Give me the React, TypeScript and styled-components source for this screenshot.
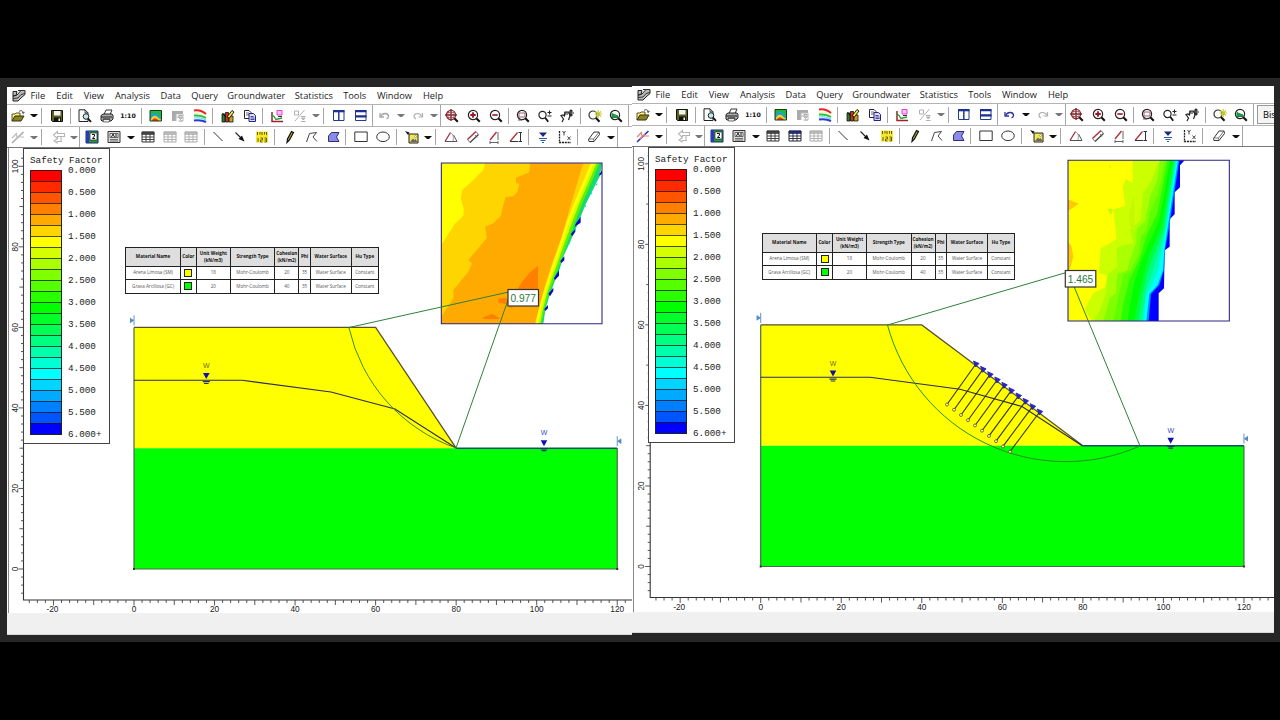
import React from "react";
import styled, { createGlobalStyle } from "styled-components";

const GlobalStyle = createGlobalStyle`
  body {
    margin: 0;
    background: #000;
    overflow: hidden;
  }
`;

const Page = styled.div`
  display: flex;
  flex-direction: column;
  justify-content: center;
  width: 1280px;
  height: 720px;
  background: #000;
`;

const Desktop = styled.div`
  display: flex;
  align-items: flex-start;
  box-sizing: border-box;
  height: 564px;
  padding-left: 7px;
  background: #262626;
`;

const Window = styled.div<{ $width: number; $top: number }>`
  display: flex;
  flex-direction: column;
  flex: none;
  width: ${(p) => p.$width}px;
  margin-top: ${(p) => p.$top}px;
  background: #fff;
  overflow: hidden;
`;

const MenuBar = styled.div`
  display: flex;
  align-items: center;
  height: 17px;
  padding-left: 5px;
  font: 9.3px "Open Sans", sans-serif;
  color: #222;
`;

const MenuItem = styled.span<{ $width: number }>`
  flex: none;
  width: ${(p) => p.$width}px;
  margin-left: 11.3px;
  display: flex;
  justify-content: center;
  white-space: nowrap;
`;

const AppIcon = styled.svg`
  flex: none;
  width: 14px;
  height: 13px;
  margin-right: -7px;
`;

const ToolBar = styled.div<{ $height: number }>`
  display: flex;
  align-items: center;
  box-sizing: border-box;
  height: ${(p) => p.$height}px;
  border-top: 1px solid #b4b4b4;
`;

const ToolButton = styled.div<{ $gap: number }>`
  display: flex;
  flex: none;
  align-items: center;
  justify-content: center;
  width: 18px;
  height: 18px;
  margin-left: ${(p) => p.$gap}px;
`;

const Caret = styled.div<{ $gap: number; $dim?: boolean }>`
  flex: none;
  box-sizing: border-box;
  width: 8px;
  height: 3px;
  margin-left: ${(p) => p.$gap}px;
  border: solid transparent;
  border-width: 3px 3px 0;
  border-top-color: ${(p) => (p.$dim ? "#777" : "#111")};
  background-clip: padding-box;
`;

const Separator = styled.div<{ $gap: number; $full?: boolean }>`
  flex: none;
  width: 1px;
  height: ${(p) => (p.$full ? 21 : 16)}px;
  margin-left: ${(p) => p.$gap}px;
  margin-right: 1px;
  background: #a6a6a6;
`;

const ScaleLabel = styled.span`
  font: bold 6.2px "DejaVu Sans", sans-serif;
  color: #111;
`;

const MethodBox = styled.div`
  flex: none;
  box-sizing: border-box;
  width: 60px;
  height: 19px;
  margin-left: 2px;
  padding-left: 5px;
  border: 1px solid #999;
  background: #f4f4f4;
  font: 9.3px/17px "Open Sans", sans-serif;
`;

const Canvas = styled.div`
  position: relative;
  box-sizing: border-box;
  height: 466px;
  border-top: 1px solid #777;
  background: #fff;
`;

const Drawing = styled.svg`
  display: block;
`;

const StatusBar = styled.div<{ $height: number }>`
  box-sizing: border-box;
  height: ${(p) => p.$height}px;
  border-bottom: 1px solid #d5d8d8;
  background: #f0f0f0;
`;

const Legend = styled.div`
  position: absolute;
  left: 16px;
  top: 0;
  box-sizing: border-box;
  width: 87px;
  height: 296px;
  padding: 5px 0 0 6px;
  border: 1px solid #444;
  background: #fff;
  font-family: "Liberation Mono", monospace;
  font-size: 9.3px;
  color: #222;
`;

const LegendTitle = styled.div`
  height: 16px;
  line-height: 13px;
  white-space: nowrap;
`;

const LegendBody = styled.div`
  display: flex;
`;

const Bands = styled.div`
  width: 32px;
  box-sizing: border-box;
  height: 265px;
  border: 1px solid #222;
  border-top: 0;
`;

const Band = styled.div<{ $color: string }>`
  box-sizing: border-box;
  height: 11px;
  border-top: 1px solid rgba(20, 20, 20, 0.75);
  background: ${(p) => p.$color};
`;

const BandLabels = styled.div`
  display: flex;
  flex-direction: column;
  margin: -10px 0 0 6px;
`;

const BandLabel = styled.span`
  height: 22px;
  line-height: 22px;
`;

const MaterialTable = styled.div<{ $left: number; $top: number }>`
  position: absolute;
  left: ${(p) => p.$left}px;
  top: ${(p) => p.$top}px;
  display: grid;
  grid-template-columns: 54.5px 16px 34px 44.5px 24px 11.5px 41px 27px;
  grid-template-rows: 19px 13.5px 13.5px;
  border: solid #222;
  border-width: 1px 0 0 1px;
  font-family: "Open Sans", sans-serif;
  font-size: 4.6px;
  line-height: 7px;
  color: #444;
`;

const Cell = styled.div<{ $head?: boolean }>`
  display: flex;
  align-items: center;
  justify-content: center;
  box-sizing: border-box;
  border: solid #222;
  border-width: 0 1px 1px 0;
  background: ${(p) => (p.$head ? "#dedede" : "#fff")};
  color: ${(p) => (p.$head ? "#111" : "#555")};
  font-weight: ${(p) => (p.$head ? 700 : 400)};
  text-align: center;
  white-space: pre;
  overflow: hidden;
`;

const Swatch = styled.div<{ $color: string }>`
  box-sizing: border-box;
  width: 8px;
  height: 8px;
  border: 1px solid #222;
  background: ${(p) => p.$color};
`;

const bandColors = [
  "#ff0000", "#ff2a00", "#ff5500", "#ff8000", "#ffaa00", "#ffd500",
  "#ffff00", "#d5ff00", "#aaff00", "#80ff00", "#55ff00", "#2aff00",
  "#00ff00", "#00ff2a", "#00ff55", "#00ff80", "#00ffaa", "#00ffd5",
  "#00ffff", "#00d5ff", "#00aaff", "#0080ff", "#0055ff", "#0000ff",
];

const bandLabels = [
  "0.000", "0.500", "1.000", "1.500", "2.000", "2.500", "3.000",
  "3.500", "4.000", "4.500", "5.000", "5.500", "6.000+",
];

const menus: [string, number][] = [
  ["File", 15], ["Edit", 16], ["View", 20], ["Analysis", 34.5],
  ["Data", 19.5], ["Query", 25.5], ["Groundwater", 55.5], ["Statistics", 37],
  ["Tools", 22], ["Window", 35], ["Help", 19.5],
];

const Lens = ({ color = "#222", children }: any) => (
  <>
    <circle cx="6" cy="6" r="4.6" fill="#fff" stroke={color} strokeWidth="1.2" />
    <path d="M9.3 9.3 L12.8 12.8" stroke="#111" strokeWidth="2" />
    {children}
  </>
);

const TableGlyph = ({ head, line }: any) => (
  <>
    <path d="M1 2h12v10H1z" fill="#fff" stroke={line} />
    <path d="M1 2h12v2.5H1z" fill={head} stroke={line} strokeWidth=".6" />
    <path d="M5 4v8M9 4v8M1 7h12M1 9.5h12" stroke={line} strokeWidth=".9" />
  </>
);

const icons: Record<string, (on: boolean) => React.ReactNode> = {
  open: () => (
    <>
      <path d="M1 12V5h3l1-1h4v3" fill="#ffee70" stroke="#554" />
      <path d="M1 12l3-5h9l-3 5z" fill="#8a8420" stroke="#333010" />
      <path d="M8 2.5c2-1.6 4-.8 4.300 1.500M11 3.500l1.400 1 1-1.600" fill="none" stroke="#333" strokeWidth=".9" />
    </>
  ),
  save: () => (
    <>
      <path d="M1.500 1.500h11v11h-10l-1-1z" fill="#5d611c" stroke="#111" />
      <path d="M4 2h6.500v4.500H4z" fill="#f2f2f2" />
      <path d="M4 8.500h7v4H4z" fill="#111" />
      <path d="M8.500 9.500h1.500v2.500H8.500z" fill="#fff" />
    </>
  ),
  preview: () => (
    <>
      <path d="M1 .8h6l3 3V12.500H1z" fill="#fff" stroke="#222" />
      <path d="M7 .8v3h3" fill="none" stroke="#222" strokeWidth=".8" />
      <circle cx="8" cy="7.500" r="2.800" fill="#bfe8ee" stroke="#222" />
      <path d="M10 9.600l3 3.200" stroke="#111" strokeWidth="1.800" />
    </>
  ),
  print: () => (
    <>
      <path d="M4 5.500L6 1h6l-2 4.500" fill="#fff" stroke="#333" />
      <path d="M1 6.500l2-1.500h9l1 1.500v3.500l-2 2H2l-1-1z" fill="#aaa" stroke="#222" />
      <path d="M1 8h11M3 10h7" stroke="#222" />
      <path d="M3 10.500h7l-1 2.500H3.500z" fill="#eee" stroke="#333" strokeWidth=".7" />
    </>
  ),
  contour: () => (
    <>
      <path d="M1 1.500h11.500v10.500H1z" fill="#22b83c" />
      <path d="M1 12V7c3-6 8-3 11.500 2v3z" fill="#1aa5c8" />
      <path d="M1.500 12c.5-5 5-7 8-3l3 2v1z" fill="#f4d224" />
      <path d="M3 12c1-3.500 4-4 7 0z" fill="#e63b1c" />
      <path d="M1 1.500h11.500v10.500H1z" fill="none" stroke="#1a3a1a" />
    </>
  ),
  grayGrid: () => (
    <>
      <path d="M1 2h11v3H5v7H1z" fill="#aaa" />
      <path d="M5 5h7v7H9M5 5v7M5 8h4" stroke="#bbb" fill="none" />
      <path d="M7.500 6.500h4M7.500 8l2 2.500L11.500 8zM7.500 12h4" fill="#ccc" stroke="#aaa" />
    </>
  ),
  rainbow: () => (
    <g fill="none" strokeWidth="2">
      <path d="M1 1.500c5-1 8 0 12 3.500" stroke="#ee2020" />
      <path d="M1 4.500c5-.5 8 0 12 3.500" stroke="#f4f4c0" />
      <path d="M1 6.500c5-.5 8 0 12 2.500" stroke="#25c040" />
      <path d="M1 9c5-.8 8 0 12 2" stroke="#50d8e8" strokeWidth="1.200" />
      <path d="M1 11.500c5-.8 8-.5 12 1.500" stroke="#2a38d8" />
    </g>
  ),
  palette: () => (
    <>
      <path d="M1 5h3v8H1z" fill="#228030" stroke="#111" strokeWidth=".8" />
      <path d="M4.500 3.500h3V13h-3z" fill="#d22c20" stroke="#111" strokeWidth=".8" />
      <path d="M8 7h4v6H8z" fill="#c8a020" stroke="#111" strokeWidth=".8" />
      <path d="M6 8l5-6.500L13 3 8.500 9z" fill="#f4e040" stroke="#111" strokeWidth=".9" />
      <path d="M1.500 4l3 4" stroke="#111" />
    </>
  ),
  copy: () => (
    <>
      <path d="M1.500 1.500h4.500l2 2v6H1.500z" fill="#fff" stroke="#223" />
      <path d="M3 4h3M3 6h3" stroke="#446" strokeWidth=".8" />
      <path d="M6 4.500h4.500l2 2V12.500H6z" fill="#dde" stroke="#228" />
      <path d="M7.500 7.500h3M7.500 9h4M7.500 10.500h4" stroke="#228" strokeWidth=".8" />
    </>
  ),
  redAxes: () => (
    <>
      <path d="M2 3v9.500h11" fill="none" stroke="#a02030" strokeWidth="1.500" />
      <path d="M1 5.500l3 2 2 3 6-1.500" fill="none" stroke="#20a030" strokeWidth="1.300" />
      <path d="M7 1.500h5v4.500H7z" fill="#ffc0ff" stroke="#e040d0" />
      <path d="M8 7.500h4" stroke="#333" />
    </>
  ),
  percent: () => (
    <g fill="none" stroke="#b0b0b0">
      <path d="M1.500 2h4v4h-4zM2 12L11.500 1" />
      <path d="M8 7.500h4.500M8 12.500h4.500M8.500 9h3.500l-1.700 2z" fill="#bbb" />
    </g>
  ),
  tileV: () => (
    <>
      <path d="M1.500 1.500h10.500v10H1.500z" fill="#fff" stroke="#223a90" />
      <path d="M1 2.200h11.500" stroke="#1c2f92" strokeWidth="2.200" />
      <path d="M6.800 2v10" stroke="#223a90" strokeWidth="1.500" />
    </>
  ),
  tileH: () => (
    <>
      <path d="M1.500 1.500h10.500v10H1.500z" fill="#fff" stroke="#223a90" />
      <path d="M1 2.200h11.500M1 7.300h11.500" stroke="#1c2f92" strokeWidth="2.200" />
    </>
  ),
  undo: (on) => (
    <g fill="none" stroke={on ? "#2a35a0" : "#a5a5a5"} strokeWidth="1.300">
      <path d="M2.500 7.500C5 3 10.500 4 10.500 7.500c0 1.500-1 2-2 2.500" />
      <path d="M2 4v4h4" />
    </g>
  ),
  redo: () => (
    <g fill="none" stroke="#b0b0b0" strokeWidth="1.200">
      <path d="M11 7.500C8.500 3 3 4 3 7.500c0 1.500 1 2 2 2.500" />
      <path d="M11.500 4v4h-4" />
    </g>
  ),
  zoomAll: () => (
    <Lens color="#802830">
      <path d="M6 0v12M0 6h12" stroke="#802830" strokeWidth="1.400" />
      <path d="M3 3.500h6v5H3z" fill="none" stroke="#a04040" strokeWidth=".8" />
    </Lens>
  ),
  zoomIn: () => <Lens><path d="M6 3.300v5.400M3.300 6h5.400" stroke="#a01028" strokeWidth="1.800" /></Lens>,
  zoomOut: () => <Lens><path d="M3.300 6h5.400" stroke="#a01028" strokeWidth="1.600" /></Lens>,
  zoomWin: () => (
    <Lens>
      <path d="M3 4h6v4H3z" fill="none" stroke="#a06070" />
      <path d="M2 11h4" stroke="#555" />
    </Lens>
  ),
  zoomPm: () => (
    <>
      <circle cx="4.500" cy="6" r="3.600" fill="#fff" stroke="#222" strokeWidth="1.200" />
      <path d="M7.200 8.800l3 4" stroke="#111" strokeWidth="1.800" />
      <path d="M9.500 3.500h4M11.500 1.500v4M9.500 7h4" stroke="#222" strokeWidth="1.100" />
    </>
  ),
  pan: () => (
    <>
      <path d="M2 13l1.500-3L1 6.500 3 6l1.500 1L5 3l4 0 1 4-1.500 4" fill="#fff" stroke="#222" strokeWidth="1.200" />
      <path d="M5 3v3M7 3v3" stroke="#222" />
      <path d="M8 4h6M11 1v6M9.500 2.500L11 1l1.500 1.500M9.500 5.500L11 7l1.500-1.500" fill="none" stroke="#222" strokeWidth="1.100" />
    </>
  ),
  zoomStar: () => (
    <>
      <circle cx="5" cy="6" r="4" fill="#fff" stroke="#333" strokeWidth="1.200" />
      <path d="M8 9l3.500 3.800" stroke="#111" strokeWidth="2" />
      <path d="M6.500 5h7.500M10.200 1v8M7.500 2.300l5.500 5.400M13 2.300L7.500 7.700" stroke="#c0c830" strokeWidth="1.100" />
    </>
  ),
  zoomExt: () => <Lens><path d="M3 8.500V4.500l2 1 4 1.500v1.500z" fill="#20a040" stroke="#184" /></Lens>,
  bolt: (on) => (
    <>
      <path d="M1 13L12.500 2" stroke={on ? "#2630c0" : "#aaa"} strokeWidth="1.600" />
      <path d="M1 8l5-5M4 10l5-5M5 3l1 4M8 7h5" stroke={on ? "#e08070" : "#bbb"} strokeWidth="1.100" />
    </>
  ),
  arrows: () => (
    <g fill="none" stroke="#b4b4b4" strokeWidth="1.100">
      <path d="M1.500 5l4-3.500v2h7v3h-7v2z" />
      <path d="M5 9l-3 2 3 2v-1.500h5M9 7v5" />
    </g>
  ),
  infoGreen: () => (
    <>
      <path d="M1 1h12v12H1z" fill="#2a9a38" stroke="#1a2a6a" />
      <path d="M1 1h3v12H1z" fill="#2838c0" />
      <path d="M5 3h7v7H5z" fill="#fff" stroke="#222" strokeWidth=".7" />
      <path d="M7 4.500h2.500v1.500L7.500 8.500H10" fill="none" stroke="#111" />
    </>
  ),
  infoView: () => (
    <>
      <path d="M1 1.500h12v11H1z" fill="#ddd" stroke="#333" />
      <path d="M3 3.500h8v4H3z" fill="#fff" stroke="#444" strokeWidth=".8" />
      <path d="M4.500 7L6 4l1.500 3M9 4v3" fill="none" stroke="#111" />
      <path d="M3 9.500h8M3 11h8" stroke="#555" strokeWidth=".8" />
    </>
  ),
  table: () => <TableGlyph head="#444" line="#333" />,
  tableBlue: (on) => <TableGlyph head={on ? "#1c28a0" : "#bbb"} line={on ? "#223" : "#aaa"} />,
  tableGray: () => <TableGlyph head="#bbb" line="#aaa" />,
  line: () => <path d="M2.500 2L11.500 11" stroke="#333" strokeWidth="1" />,
  arrow: () => (
    <>
      <path d="M2.500 2.500L9 9" stroke="#222" strokeWidth="1.100" />
      <path d="M11.500 11.500L5.500 9 9 5.500z" fill="#111" />
    </>
  ),
  ruler: () => (
    <>
      <path d="M1 1.500h12v11H1z" fill="#f6e82c" />
      <path d="M2.500 2v3M5 2v2.500M7 2v3M9.500 2v2.500M11.500 2v3" stroke="#554c00" strokeWidth=".9" />
      <path d="M3 8v4M5.500 8h2v2h-2v2h2M9.500 8h2v4h-2M9.500 10h2" stroke="#5c5400" strokeWidth=".9" fill="none" />
    </>
  ),
  pencil: () => <path d="M4 12.500L4.500 9 8.500 1.500l2 1L6.500 10z" fill="#a8a030" stroke="#111" strokeWidth="1.200" />,
  polyline: () => <path d="M1.500 12L4.500 3.500 11.500 2.500 8 7 12 11.500" fill="none" stroke="#444" />,
  polygon: () => <path d="M1.500 11.500V6l3-3.500h7.500L9.500 7l2.500 4.500z" fill="#8a8ae8" stroke="#303078" />,
  rect: () => <path d="M.8 2h12.400v9.500H.8z" fill="#fff" stroke="#333" />,
  ellipse: () => <ellipse cx="7" cy="6.800" rx="6.300" ry="4.800" fill="#fff" stroke="#333" />,
  image: () => (
    <>
      <path d="M4 4h9v9H4z" fill="#f4e850" stroke="#222" />
      <path d="M5 12l3-3.500 1.500 1.500 1-1 2 3z" fill="#667" />
      <circle cx="10.500" cy="6.500" r="1" fill="#fff" stroke="#666" strokeWidth=".5" />
      <path d="M0 1l4.500 1.500L3 5z" fill="#111" />
    </>
  ),
  triangle: () => (
    <>
      <path d="M1 11.500L6.500 2.500" stroke="#a03040" strokeWidth="1.300" />
      <path d="M1 11.500h12L9.500 5" fill="none" stroke="#555" />
      <path d="M7 3c2 1 3 4 2 8" fill="none" stroke="#888" strokeWidth=".8" />
    </>
  ),
  parallel: () => (
    <>
      <path d="M1.500 9.500L10 1.500" stroke="#b03040" strokeWidth="1.400" />
      <path d="M4 12.500L12.500 4.500" stroke="#444" strokeWidth="1.200" />
      <path d="M1.500 9.500l2.500 3M10 1.500l2.500 3M9 5l2 2.500" stroke="#555" strokeWidth=".8" />
    </>
  ),
  rise: () => (
    <>
      <path d="M3 10L9.500 2" stroke="#b03040" strokeWidth="1.300" />
      <path d="M11 2v8M3 12.500h8M3 11v3M11 11v3" stroke="#555" strokeWidth=".9" />
    </>
  ),
  height: () => (
    <>
      <path d="M1 11.500L8.500 2.500" stroke="#b03040" strokeWidth="1.300" />
      <path d="M1 11.500h8M9.500 2.500h3.500M9.500 11.500h3.500M11.500 3v8" stroke="#333" strokeWidth="1" />
    </>
  ),
  water: () => (
    <>
      <path d="M3 2.500h8L7 7z" fill="#20287c" />
      <path d="M3 8.500h8M4.500 10.500h5M6 12.500h2" stroke="#2a5aa8" />
    </>
  ),
  axes: () => (
    <>
      <path d="M1.500 1v11.500H13" fill="none" stroke="#222" strokeDasharray="2 .8" strokeWidth="1.300" />
      <path d="M4.500 1l1.500 2 1.500-2M6 3v2.500M9.500 6.500l3 3.500M12.500 6.500l-3 3.500" fill="none" stroke="#333" strokeWidth=".9" />
    </>
  ),
  eraser: () => (
    <>
      <path d="M1.500 9.500L7 2h5l.5 2.500L7 11.500H2z" fill="#fff" stroke="#333" />
      <path d="M7 11.500L6.500 9h-5M6.500 9L12 2" fill="none" stroke="#555" strokeWidth=".8" />
    </>
  ),
};

// "v" is a drop-down caret, "V" a dimmed one, "|" a separator, "||" a full-height one
type Tool = [string, number];

const fileTools: Tool[] = [
  ["open", 2], ["v", 3], ["|", 3], ["save", 5], ["|", 4], ["preview", 4],
  ["print", 4], ["1:10", 3], ["|", 4], ["contour", 4], ["grayGrid", 4],
  ["rainbow", 4], ["|", 3], ["palette", 5], ["copy", 4], ["|", 3],
  ["redAxes", 4], ["percent", 5], ["V", 3], ["|", 3], ["tileV", 5],
  ["tileH", 4], ["||", 2], ["undo", 2], ["u", 3], ["redo", 4], ["V", 3],
  ["||", 2], ["zoomAll", 1], ["zoomIn", 4], ["zoomOut", 4], ["|", 3],
  ["zoomWin", 4], ["zoomPm", 4], ["pan", 4], ["|", 4], ["zoomStar", 4],
  ["zoomExt", 3], ["||", 3],
];

const drawTools: Tool[] = [
  ["bolt", 2], ["u", 3], ["|", 3], ["arrows", 7], ["V", 2], ["||", 1],
  ["infoGreen", 2], ["infoView", 4], ["v", 4], ["table", 4],
  ["tableBlue", 4], ["tableGray", 3], ["|", 4], ["line", 3], ["arrow", 4],
  ["ruler", 4], ["|", 3], ["pencil", 5], ["polyline", 4], ["polygon", 4],
  ["|", 2], ["rect", 5], ["ellipse", 4], ["|", 4], ["image", 5], ["v", 3],
  ["|", 3], ["triangle", 5], ["parallel", 4], ["rise", 3], ["height", 4],
  ["|", 3], ["water", 4], ["axes", 4], ["|", 3], ["eraser", 6], ["v", 4],
  ["||", 2],
];

const Tools = ({ items, active }: { items: Tool[]; active: boolean }) => (
  <>
    {items.map(([name, gap], i) => {
      if (name === "|" || name === "||") return <Separator key={i} $gap={gap} $full={name === "||"} />;
      if (name === "v") return <Caret key={i} $gap={gap} />;
      if (name === "V") return <Caret key={i} $gap={gap} $dim />;
      if (name === "u") return <Caret key={i} $gap={gap} $dim={!active} />;
      return (
        <ToolButton key={i} $gap={gap}>
          {name === "1:10" ? (
            <ScaleLabel>1:10</ScaleLabel>
          ) : (
            <svg width="14" height="14" viewBox="0 0 14 14" fill="none">{icons[name](active)}</svg>
          )}
        </ToolButton>
      );
    })}
  </>
);

const materials = [
  ["Arena Limosa (SM)", "#ffff00", "18", "Mohr-Coulomb", "20", "35", "Water Surface", "Constant"],
  ["Grava Arcillosa (GC)", "#00ff00", "20", "Mohr-Coulomb", "40", "35", "Water Surface", "Constant"],
];

const Materials = ({ left, top }: { left: number; top: number }) => (
  <MaterialTable $left={left} $top={top}>
    {["Material Name", "Color", "Unit Weight\n(kN/m3)", "Strength Type", "Cohesion\n(kN/m2)", "Phi", "Water Surface", "Hu Type"].map((h) => (
      <Cell key={h} $head>{h}</Cell>
    ))}
    {materials.map((row) =>
      row.map((value, i) => (
        <Cell key={row[0] + i}>{i === 1 ? <Swatch $color={value} /> : value}</Cell>
      ))
    )}
  </MaterialTable>
);

const SafetyLegend = () => (
  <Legend>
    <LegendTitle>Safety Factor</LegendTitle>
    <LegendBody>
      <Bands>
        {bandColors.map((c) => <Band key={c} $color={c} />)}
      </Bands>
      <BandLabels>
        {bandLabels.map((l) => <BandLabel key={l}>{l}</BandLabel>)}
      </BandLabels>
    </LegendBody>
  </Legend>
);

const SCALE = 4.027;

const range = (from: number, to: number, step: number) => {
  const out: number[] = [];
  for (let v = from; v <= to; v += step) out.push(v);
  return out;
};

// ox, oy: pixel position of the model origin (0, 0)
const Rulers = ({ ox, oy }: { ox: number; oy: number }) => {
  const x0 = ox - 110.5;
  const y0 = oy + 31;
  return (
    <g fontFamily="Liberation Sans, sans-serif" fontSize="8.3" fill="#222" textAnchor="middle">
      <path d={`M${x0} ${y0 - 460}V${y0}H${x0 + 640}`} fill="none" stroke="#333" strokeWidth="1.1" />
      {range(-26, 126, 2).map((v) => (
        <path key={v} d={`M${ox + v * SCALE} ${y0}v${v % 20 === 0 ? 5.5 : v % 10 === 0 ? 5 : 3}`} stroke="#444" strokeWidth=".9" />
      ))}
      {range(-6, 102, 2).map((v) => (
        <path key={v} d={`M${x0} ${oy - v * SCALE}h${v % 20 === 0 ? -5 : v % 10 === 0 ? -4 : -2.5}`} stroke="#444" strokeWidth=".9" />
      ))}
      {range(-20, 120, 20).map((v) => (
        <text key={v} x={ox + v * SCALE - (v < 0 ? 1 : 0)} y={y0 + 12}>{v}</text>
      ))}
      {range(0, 100, 20).map((v) => (
        <text key={v} transform={`translate(${x0 - 6} ${oy - v * SCALE}) rotate(-90)`}>{v}</text>
      ))}
    </g>
  );
};

const WaterMark = ({ x, y, onLand }: { x: number; y: number; onLand?: boolean }) => (
  <g>
    <text x={x} y={y - 12.5} fontFamily="Liberation Sans, sans-serif" fontSize="7" fill={onLand ? "#6d6a20" : "#3a48c8"} textAnchor="middle">W</text>
    <path d={`M${x - 3.3} ${y - 7.5}h6.600l-3.300 6z`} fill="#1010b0" />
    <path d={`M${x - 3.5} ${y + 1.200}h7M${x - 2.300} ${y + 3}h4.600`} stroke="#223070" strokeWidth="1.200" />
  </g>
);

const EdgeMark = ({ x, y, flip }: { x: number; y: number; flip?: boolean }) => (
  <g transform={`translate(${x} ${y}) scale(${flip ? -1 : 1} 1)`} stroke="#5088c0" fill="#5088c0">
    <path d="M0-5V5" strokeWidth=".9" />
    <path d="M-3.500-2.500v5M-3.500-2l3 2-3 2z" strokeWidth=".8" />
  </g>
);

const Soil = ({ ox, oy, crest }: { ox: number; oy: number; crest: number }) => {
  const top = oy - 60 * SCALE;
  const mid = oy - 30 * SCALE;
  const right = ox + 120 * SCALE;
  const toe = ox + 80 * SCALE;
  const edge = ox + crest * SCALE;
  return (
    <g>
      <path d={`M${ox} ${top}H${edge}L${toe} ${mid}H${ox}z`} fill="#ffff00" />
      <path d={`M${ox} ${mid}H${right}V${oy}H${ox}z`} fill="#00ff00" />
      <path d={`M${ox} ${top}H${edge}L${toe} ${mid}`} fill="none" stroke="#5a5030" strokeWidth="1.300" />
      <path d={`M${ox} ${top}V${oy}H${right}V${mid}`} fill="none" stroke="#4c6a4c" strokeWidth="1.200" />
      <path d={`M${toe} ${mid}H${right}`} stroke="#14506e" strokeWidth="1.600" />
      <path d={`M${ox - 1} ${oy - 1}h2v2h-2zM${right - 1} ${oy - 1}h2v2h-2z`} fill="#333" />
      <WaterMark x={ox + 72.3} y={oy - 188.5} onLand />
      <WaterMark x={ox + 410} y={mid - 0.5} />
      <EdgeMark x={ox} y={top - 7} />
      <EdgeMark x={right} y={mid - 7} flip />
    </g>
  );
};

const FactorBox = ({ x, y, value }: { x: number; y: number; value: string }) => (
  <g>
    <rect x={x} y={y} width="30.500" height="16.500" fill="#fff" stroke="#333" strokeWidth="1.200" />
    <text x={x + 15.2} y={y + 12} fontFamily="Liberation Sans, sans-serif" fontSize="10.2" fill="#2a7a3a" textAnchor="middle">{value}</text>
  </g>
);

const SteepContours = () => (
  <g transform="translate(430 155) scale(.33333)">
    <path d="M34 24H516V506H34z" fill="#fff" />
    <path d="M34 24H516L510 62 496 90 480 122 466 150 452 185 438 220 420 262 402 300 388 345 372 385 356 430 346 465 340 506H34z" fill="#18d870" />
    <path d="M34 24H508L490 70 460 138 434 205 404 285 380 350 358 410 342 465 335 506H34z" fill="#60f000" />
    <path d="M34 24H500L480 72 450 140 425 205 397 282 373 350 351 415 338 465 330 506H34z" fill="#d5ff00" />
    <path d="M34 24H492L468 80 442 140 417 205 392 280 368 350 345 415 332 465 324 506H34z" fill="#ffff00" />
    <path d="M34 24H483L455 90 430 150 410 200 386 275 362 345 338 420 326 465 316 506H34z" fill="#ffd500" />
    <path d="M34 24H460L440 90 415 175 395 245 370 315 350 375 330 445 315 506H34z" fill="#ffaa00" />
    <path d="M34 24H300L298 52 258 68V84L268 86 262 110 250 124 227 126 220 150 213 182 190 205 166 215 170 250 115 315 126 325 115 350 70 405 70 430 34 485z" fill="#ffd500" />
    <path d="M34 24H165L160 45 130 75 97 105 92 130 101 160 100 182 75 206 34 270z" fill="#ffff00" />
    <path d="M324 332L300 352 275 382 262 404H324zM205 430L232 430V448L205 443zM158 488L185 476 208 488 208 492H160zM238 455L250 455 245 460z" fill="#ff8000" />
    <path d="M438 205L452 185V203L434 215zM422 238L436 222V230L427 243zM391 318L403 304V316L394 324zM372 370L387 346V362L375 375zM355 416L370 398V408L360 424zM343 462L354 450V460L346 468zM508 58L516 46V56L509 62z" fill="#0808c0" />
    <path d="M480 118L486 108V118zM494 92L502 84V90zM462 158L468 148V155zM412 270L419 262V268z" fill="#20d8f0" />
    <path d="M34 24H516V506H34z" fill="none" stroke="#2c2484" strokeWidth="3.200" />
  </g>
);

const GentleContours = () => (
  <g transform="translate(1050 150) scale(.33333)">
    <path d="M54 31H538V513H54z" fill="#fff" />
    <path d="M54 31H404L390 46V112L374 127V193L359 208V290L344 301 342 415 326 430V513H54z" fill="#0000ff" />
    <path d="M54 31H388L356 240 345 300 342 360 328 405 303 432 296 513H54z" fill="#0090ff" />
    <path d="M54 31H384L352 240 343 300 339 360 323 405 298 432 289 513H54z" fill="#00ffff" />
    <path d="M54 31H379L348 240 336 300 325 360 305 405 288 435 282 513H54z" fill="#00ffb8" />
    <path d="M54 31H376L344 240 328 300 307 365 290 415 274 513H54z" fill="#00ff80" />
    <path d="M54 31H373L340 240 315 305 292 370 278 430 265 513H54z" fill="#00ff3c" />
    <path d="M54 31H369L334 230 295 320 275 400 252 513H54z" fill="#00ff00" />
    <path d="M54 31H360L328 210 275 330 252 400 232 513H54z" fill="#2aff00" />
    <path d="M54 31H352L322 190 290 255 268 330 240 385 222 450 212 513H54z" fill="#60ff00" />
    <path d="M54 31H345L325 130 300 185 290 240 272 260 268 310 242 362 220 372 208 430 190 513H54z" fill="#80ff00" />
    <path d="M54 31H330L322 90 300 140 285 215 262 235 258 280 240 330 232 360 202 372 198 428 180 445 160 513H54z" fill="#aaff00" />
    <path d="M54 31H328L305 90 280 130 272 210 240 240 250 280 222 285 200 295 202 350 172 375 168 430 150 480 132 513H54z" fill="#ccff00" />
    <path d="M54 31H248V98L228 88 218 110 226 168 190 178 200 268 152 295 146 370 172 376 165 412 130 430 105 478 125 513H54z" fill="#ffff00" />
    <path d="M172 176L190 178 182 196zM178 46l6 4-5 4zM236 196l16-60 2 110-14-20z" fill="#c4f800" />
    <path d="M54 148L86 161 54 183zM54 275L64 288 70 320 60 356 54 362z" fill="#ffc800" />
    <path d="M54 31H538V513H54z" fill="none" stroke="#2c2484" strokeWidth="3.200" />
  </g>
);

const Bolts = () => (
  <g>
    {range(0, 9, 1).map((i) => {
      const hx = 975.5 + i * 7.08;
      const hy = 364.5 + i * 5.33;
      const tx = 947 + i * 7;
      const ty = 404.5 + i * 5.24;
      return (
        <g key={i}>
          <path d={`M${hx} ${hy}L${tx} ${ty}`} stroke="#33300c" strokeWidth="1.100" />
          <circle cx={tx} cy={ty} r="1.500" fill="#ffff90" stroke="#54503c" strokeWidth=".8" />
          <path d={`M${hx - 2} ${hy - 3.500}l5.500 2.500-3.500 3.500z`} fill="#2828d0" stroke="#2020a0" strokeWidth=".8" />
        </g>
      );
    })}
  </g>
);

const Chrome = ({ active }: { active: boolean }) => (
  <>
    <MenuBar>
      <AppIcon viewBox="0 0 14 13" fill="none">
        <path d="M1 2.500h4l-1 4-3 .5zM1 7l4-1 4-4.500h4v4L9 9l-3 3H1z" fill="#bbb" stroke="#222" />
        <path d="M1 9.500l5-.5 3-3.500 4-1M6 1.500h7" stroke="#333" />
      </AppIcon>
      {menus.map(([name, width]) => (
        <MenuItem key={name} $width={width}>{name}</MenuItem>
      ))}
    </MenuBar>
    <ToolBar $height={22}>
      <Tools items={fileTools} active={active} />
      {active && <MethodBox>Bishop</MethodBox>}
    </ToolBar>
    <ToolBar $height={21}>
      <Tools items={drawTools} active={active} />
    </ToolBar>
  </>
);

const App = () => {
  return (
    <Page>
      <GlobalStyle />
      <Desktop>
        <Window $width={625} $top={9}>
          <Chrome active={false} />
          <Canvas>
            <Drawing width="625" height="465" viewBox="7 148 625 465">
              <path d="M8.500 148V613" stroke="#888" />
              <Rulers ox={134} oy={569} />
              <Soil ox={134} oy={569} crest={60} />
              <path d="M134 380.300H242L331 392 395 409 456 448" fill="none" stroke="#2c2c50" strokeWidth="1.100" />
              <SteepContours />
              <path d="M349 328A166 166 0 0 0 456 448" fill="none" stroke="#3c8c14" />
              <path d="M349 327.500L511 291.500 456 448" fill="none" stroke="#2f8038" />
              <FactorBox x={508} y={289.5} value="0.977" />
            </Drawing>
            <SafetyLegend />
            <Materials left={118.3} top={98.5} />
          </Canvas>
          <StatusBar $height={22} />
        </Window>
        <Window $width={642} $top={8}>
          <Chrome active />
          <Canvas>
            <Drawing width="642" height="465" viewBox="632 147 642 465">
              <path d="M633.500 147V612" stroke="#888" />
              <Rulers ox={760.7} oy={566.5} />
              <Soil ox={760.7} oy={566.5} crest={40} />
              <path d="M760.500 377.200H870L960 389.200 1022 406.500 1082.500 446" fill="none" stroke="#2c2c50" strokeWidth="1.100" />
              <path d="M887.500 325A184.500 184.500 0 0 0 1140 446" fill="none" stroke="#28901c" />
              <Bolts />
              <GentleContours />
              <path d="M887.500 325L1068 272 1140 446" fill="none" stroke="#2f8038" />
              <FactorBox x={1065.3} y={270.5} value="1.465" />
            </Drawing>
            <SafetyLegend />
            <Materials left={129.5} top={85.5} />
          </Canvas>
          <StatusBar $height={21} />
        </Window>
      </Desktop>
    </Page>
  );
};

export default App;
